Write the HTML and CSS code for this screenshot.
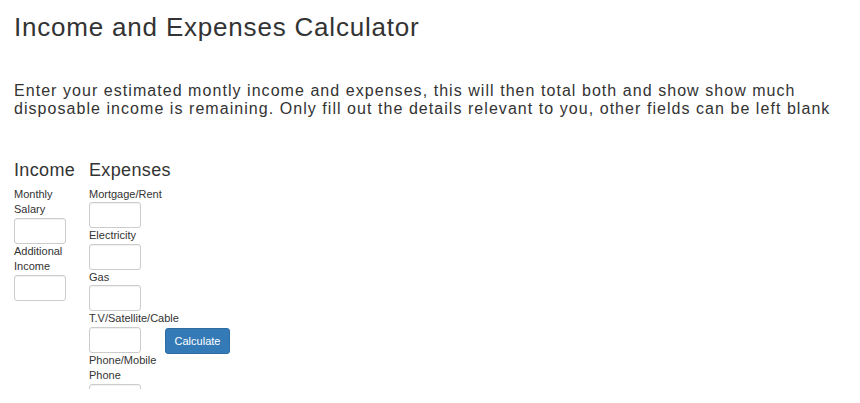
FILE: index.html
```html
<!DOCTYPE html>
<html lang="en">
<head>
<meta charset="utf-8">
<title>Income and Expenses Calculator</title>
<link rel="stylesheet" href="styles.css">
</head>
<body>
<div class="page">
  <h1 class="title">Income and Expenses Calculator</h1>
  <p class="lead">Enter your estimated montly income and expenses, this will then total both and show show much disposable income is remaining. Only fill out the details relevant to you, other fields can be left blank</p>
  <form class="calc">
    <div class="col">
      <h3 class="col-title">Income</h3>
      <label class="field"><span class="lbl">Monthly Salary</span><input type="text" class="inp"></label>
      <label class="field"><span class="lbl">Additional Income</span><input type="text" class="inp"></label>
    </div>
    <div class="col">
      <h3 class="col-title">Expenses</h3>
      <label class="field"><span class="lbl">Mortgage/Rent</span><input type="text" class="inp"></label>
      <label class="field"><span class="lbl">Electricity</span><input type="text" class="inp"></label>
      <label class="field"><span class="lbl">Gas</span><input type="text" class="inp"></label>
      <label class="field"><span class="lbl">T.V/Satellite/Cable</span><input type="text" class="inp"></label>
      <label class="field"><span class="lbl">Phone/Mobile Phone</span><input type="text" class="inp"></label>
    </div>
    <div class="actions">
      <button type="button" class="btn">Calculate</button>
    </div>
  </form>
</div>
</body>
</html>
```
FILE: styles.css
```css
html, body {
  margin: 0;
  padding: 0;
  background: #fff;
}
body {
  font-family: "Liberation Sans", Arial, sans-serif;
  color: #333;
}
.page {
  height: 389px;
  overflow: hidden;
  padding: 0 14px;
}
.title {
  margin: 13px 0 0;
  font-size: 26px;
  line-height: 29px;
  font-weight: 400;
  letter-spacing: 0.8px;
}
.lead {
  margin: 39.5px 0 0;
  font-size: 16px;
  line-height: 18px;
  letter-spacing: 1.05px;
}
.calc {
  display: flex;
  align-items: flex-start;
  margin-top: 42px;
}
.col {
  width: 63px;
  padding-right: 12px;
  display: flex;
  flex-direction: column;
}
.col-title {
  margin: 0 0 7px;
  font-size: 18px;
  line-height: 20px;
  font-weight: 400;
  letter-spacing: 0.35px;
  white-space: nowrap;
}
.field {
  display: flex;
  flex-direction: column;
  font-size: 11px;
  line-height: 15.5px;
}
.lbl {
  display: block;
}
.inp {
  box-sizing: border-box;
  width: 52px;
  height: 26px;
  margin: 0;
  padding: 3px 6px;
  border: 1px solid #ccc;
  border-radius: 3px;
  background: #fff;
  box-shadow: inset 0 1px 1px rgba(0,0,0,0.06);
  font: inherit;
}
.actions {
  padding-top: 168px;
  padding-left: 1px;
}
.btn {
  box-sizing: border-box;
  width: 65px;
  height: 26px;
  margin: 0;
  padding: 0;
  border: 1px solid #2e6da4;
  border-radius: 3px;
  background: #337ab7;
  color: #fff;
  font-family: "Liberation Sans", Arial, sans-serif;
  font-size: 11px;
  line-height: 24px;
  cursor: pointer;
}
```
